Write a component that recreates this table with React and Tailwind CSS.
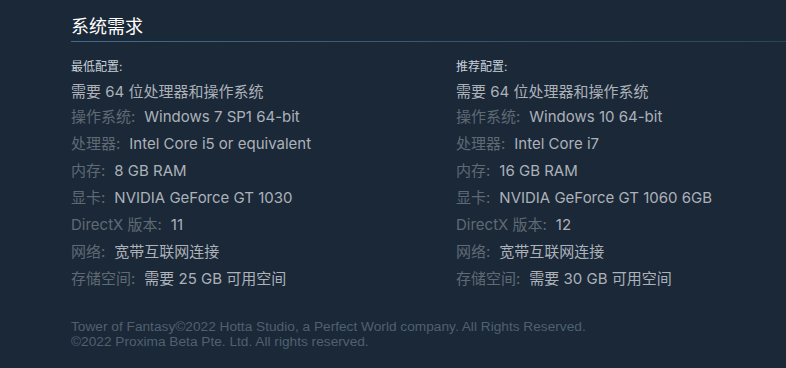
const minimum = [
  ["操作系统:", "Windows 7 SP1 64-bit"],
  ["处理器:", "Intel Core i5 or equivalent"],
  ["内存:", "8 GB RAM"],
  ["显卡:", "NVIDIA GeForce GT 1030"],
  ["DirectX 版本:", "11"],
  ["网络:", "宽带互联网连接"],
  ["存储空间:", "需要 25 GB 可用空间"],
];

const recommended = [
  ["操作系统:", "Windows 10 64-bit"],
  ["处理器:", "Intel Core i7"],
  ["内存:", "16 GB RAM"],
  ["显卡:", "NVIDIA GeForce GT 1060 6GB"],
  ["DirectX 版本:", "12"],
  ["网络:", "宽带互联网连接"],
  ["存储空间:", "需要 30 GB 可用空间"],
];

function ReqColumn({ title, rows }) {
  return (
    <div>
      <p className="text-[12px] leading-[16px] text-[#c6d0d8]">{title}</p>
      <p className="mt-[8px] text-[15px] leading-[18px] text-[#acb2b8]">
        需要 64 位处理器和操作系统
      </p>
      <ul className="mt-[7px] flex flex-col gap-[9px]">
        {rows.map(([label, value]) => (
          <li key={label} className="text-[15px] leading-[18px]">
            <span className="text-[#5f6a74]">{label}</span>
            <span className="ml-[9px] text-[#acb2b8]">{value}</span>
          </li>
        ))}
      </ul>
    </div>
  );
}

export default function App() {
  return (
    <div
      className="h-[368px] w-[786px] overflow-hidden bg-[#1b2838] pl-[71px] pt-[14px]"
      style={{ fontFamily: 'Inter, "Noto Sans CJK SC", sans-serif' }}
    >
      <h2 className="text-[18px] leading-[26px] text-white">系统需求</h2>
      <div className="mt-[1px] h-px bg-gradient-to-r from-[#3b6e8c] to-[#2a4654]" />
      <div className="mt-[17px] grid grid-cols-[385px_1fr]">
        <ReqColumn title="最低配置:" rows={minimum} />
        <ReqColumn title="推荐配置:" rows={recommended} />
      </div>
      <div
        className="mt-[31px] text-[13.7px] leading-[15px] text-[#4f6070]"
        style={{ fontFamily: '"Liberation Sans", Arial, sans-serif' }}
      >
        <p>Tower of Fantasy©2022 Hotta Studio, a Perfect World company. All Rights Reserved.</p>
        <p>©2022 Proxima Beta Pte. Ltd. All rights reserved.</p>
      </div>
    </div>
  );
}
